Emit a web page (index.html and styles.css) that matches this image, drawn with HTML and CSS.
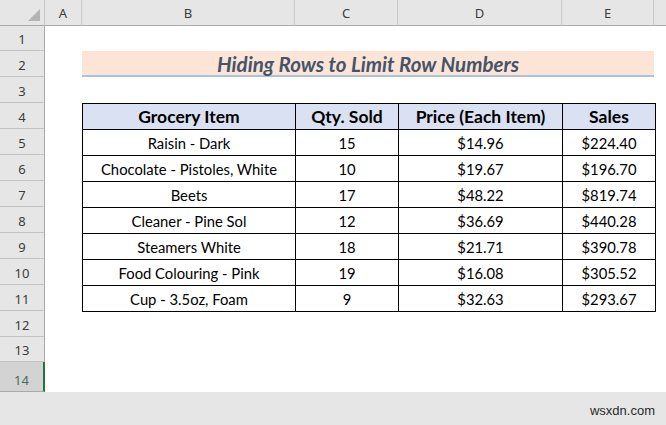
FILE: index.html
```html
<!DOCTYPE html>
<html>
<head>
<meta charset="utf-8">
<link rel="stylesheet" href="styles.css">
</head>
<body>
<div class="app">
  <div class="sheet">
    <div class="corner hdr"><svg class="tri" width="12" height="12" viewBox="0 0 12 12"><polygon points="12,0 12,12 0,12" fill="#b4b4b4"/></svg></div>
    <div class="colhdr">A</div>
    <div class="colhdr">B</div>
    <div class="colhdr">C</div>
    <div class="colhdr">D</div>
    <div class="colhdr">E</div>
    <div class="colhdr last"></div>

    <div class="rowhdr r1">1</div>
    <div class="rowhdr r2">2</div>
    <div class="rowhdr r3">3</div>
    <div class="rowhdr r4">4</div>
    <div class="rowhdr r5">5</div>
    <div class="rowhdr r6">6</div>
    <div class="rowhdr r7">7</div>
    <div class="rowhdr r8">8</div>
    <div class="rowhdr r9">9</div>
    <div class="rowhdr r10">10</div>
    <div class="rowhdr r11">11</div>
    <div class="rowhdr r12">12</div>
    <div class="rowhdr r13">13</div>
    <div class="rowhdr r14 selected">14</div>

    <div class="title">Hiding Rows to Limit Row Numbers</div>

    <table class="data">
      <colgroup>
        <col class="cb"><col class="cc"><col class="cd"><col class="ce">
      </colgroup>
      <thead>
        <tr><th>Grocery Item</th><th>Qty. Sold</th><th>Price (Each Item)</th><th>Sales</th></tr>
      </thead>
      <tbody>
        <tr><td>Raisin - Dark</td><td>15</td><td>$14.96</td><td>$224.40</td></tr>
        <tr><td>Chocolate - Pistoles, White</td><td>10</td><td>$19.67</td><td>$196.70</td></tr>
        <tr><td>Beets</td><td>17</td><td>$48.22</td><td>$819.74</td></tr>
        <tr><td>Cleaner - Pine Sol</td><td>12</td><td>$36.69</td><td>$440.28</td></tr>
        <tr><td>Steamers White</td><td>18</td><td>$21.71</td><td>$390.78</td></tr>
        <tr><td>Food Colouring - Pink</td><td>19</td><td>$16.08</td><td>$305.52</td></tr>
        <tr><td>Cup - 3.5oz, Foam</td><td>9</td><td>$32.63</td><td>$293.67</td></tr>
      </tbody>
    </table>
  </div>
  <div class="footer"><span class="mark">wsxdn.com</span></div>
</div>
</body>
</html>
```
FILE: styles.css
```css
* { box-sizing: border-box; }
html, body { margin: 0; padding: 0; }
body {
  width: 666px;
  height: 425px;
  overflow: hidden;
  background: #ffffff;
  font-family: "Noto Sans", "Open Sans", sans-serif;
}
.app {
  display: flex;
  flex-direction: column;
  height: 425px;
}
.sheet {
  display: grid;
  grid-template-columns: 45px 37px 213px 103px 164px 92px 1fr;
  grid-template-rows: 26px 25px 26px 26px 26px 26px 26px 26px 26px 26px 26px 26px 26px 25px 30px;
  background: #ffffff;
}
.hdr, .colhdr {
  background: #e6e6e6;
  border-bottom: 1px solid #ababab;
}
.corner {
  grid-row: 1;
  grid-column: 1;
  border-right: 1px solid #c6c6c6;
  display: flex;
  align-items: flex-end;
  justify-content: flex-end;
  padding: 0 4px 4px 0;
}
.tri { display: block; }
.colhdr {
  grid-row: 1;
  border-right: 1px solid #c9c9c9;
  color: #3c3c3c;
  font-size: 13px;
  display: flex;
  align-items: center;
  justify-content: center;
  padding-top: 1px;
}
.colhdr.last { border-right: none; }
.rowhdr {
  grid-column: 1;
  background: #e6e6e6;
  border-right: 1px solid #ababab;
  border-bottom: 1px solid #c3c3c3;
  color: #3c3c3c;
  font-size: 13px;
  display: flex;
  align-items: center;
  justify-content: center;
  padding-top: 2px;
}
.r1 { grid-row: 2; }
.r2 { grid-row: 3; }
.r3 { grid-row: 4; }
.r4 { grid-row: 5; }
.r5 { grid-row: 6; }
.r6 { grid-row: 7; }
.r7 { grid-row: 8; }
.r8 { grid-row: 9; }
.r9 { grid-row: 10; }
.r10 { grid-row: 11; }
.r11 { grid-row: 12; }
.r12 { grid-row: 13; }
.r13 { grid-row: 14; }
.r14 { grid-row: 15; }
.rowhdr.selected {
  background: #d3d3d3;
  border-right: 2px solid #217346;
  border-bottom: 1px solid #ababab;
  color: #4a6d5a;
  padding-top: 7px;
}
.title {
  grid-row: 3;
  grid-column: 3 / 7;
  background: #fce4d6;
  border-bottom: 2px solid #adc3dc;
  color: #44546a;
  font-family: "Lato", "Open Sans", sans-serif;
  font-weight: 700;
  font-style: italic;
  font-size: 20.5px;
  display: flex;
  align-items: center;
  justify-content: center;
  padding-top: 1px;
}
.data {
  grid-row: 5 / 13;
  grid-column: 3 / 7;
  align-self: start;
  border-collapse: collapse;
  table-layout: fixed;
  width: 573px;
  font-family: "Lato", "Open Sans", sans-serif;
  font-size: 14.8px;
  color: #000000;
}
.cb { width: 213px; }
.cc { width: 103px; }
.cd { width: 164px; }
.ce { width: 93px; }
.data th, .data td {
  border: 1px solid #000000;
  height: 26px;
  padding: 0 2px;
  text-align: center;
  vertical-align: middle;
  line-height: 18px;
}
.data th {
  background: #d9e1f2;
  font-weight: 700;
  font-size: 17.5px;
}
.footer {
  flex: 1;
  background: #e6e6e6;
  display: flex;
  align-items: center;
  justify-content: flex-end;
  padding: 4px 11px 0 0;
}
.mark {
  font-family: "Liberation Sans", Arial, sans-serif;
  font-size: 13px;
  color: #2a2a2a;
}
```
